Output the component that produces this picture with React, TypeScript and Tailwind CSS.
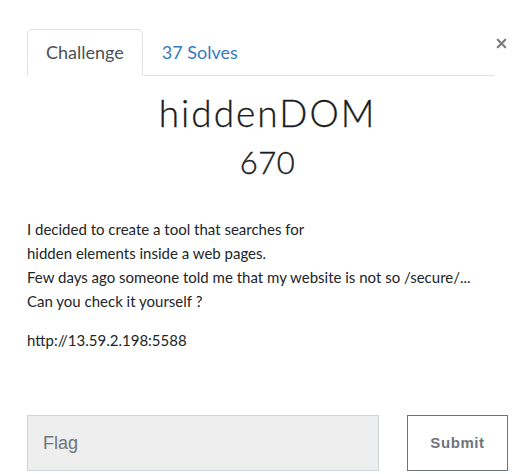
import { X } from "lucide-react";

const App = () => {
  return (
    <div className="relative h-[474px] w-[521px] overflow-hidden bg-white font-['Lato',sans-serif] text-[#212529]">
      <button className="absolute right-[12px] top-[36px] text-[#7a7a7a]" aria-label="Close">
        <X size={15} strokeWidth={3.4} />
      </button>
      <div className="pl-[27px] pr-[13px] pt-[29px]">
        <div className="flex w-[467px] border-b border-[#dee2e6]">
          <div className="-mb-px h-[47px] rounded-t-[5px] border border-b-white border-[#dee2e6] bg-white px-[18px] pt-[9px] text-[18px] text-[#495057]">
            Challenge
          </div>
          <div className="px-[19px] pt-[10px] text-[18px] text-[#3579c1]">
            37 Solves
          </div>
        </div>
        <div className="flex flex-col items-center text-center">
          <h2 className="mt-[15px] text-[37px] leading-[44px] font-light tracking-[2px] text-[#1a1d20] [-webkit-text-stroke:0.3px_#1a1d20]">
            hiddenDOM
          </h2>
          <h3 className="mt-[7px] text-[31px] leading-[40px] font-light tracking-[0.5px] text-[#1a1d20] [-webkit-text-stroke:0.4px_#1a1d20]">
            670
          </h3>
        </div>
        <div className="mt-[35px] text-[15px] leading-[24px] text-[#212529]">
          <p>
            I decided to create a tool that searches for
            <br />
            hidden elements inside a web pages.
            <br />
            Few days ago someone told me that my website is not so /secure/...
            <br />
            Can you check it yourself ?
          </p>
          <p className="mt-[15px]">http://13.59.2.198:5588</p>
        </div>
        <div className="mt-[63px] flex items-center gap-[28px]">
          <div className="flex h-[56px] w-[352px] items-center border border-[#ced4da] bg-[#eeeeee] pl-[15px] font-['Liberation_Sans',sans-serif] text-[18px] text-[#6c757d]">
            Flag
          </div>
          <button className="h-[56px] w-[101px] border border-[#6c757d] bg-white font-['Liberation_Sans',sans-serif] text-[15px] font-bold tracking-[0.6px] text-[#6c757d]">
            Submit
          </button>
        </div>
      </div>
    </div>
  );
};

export default App;
